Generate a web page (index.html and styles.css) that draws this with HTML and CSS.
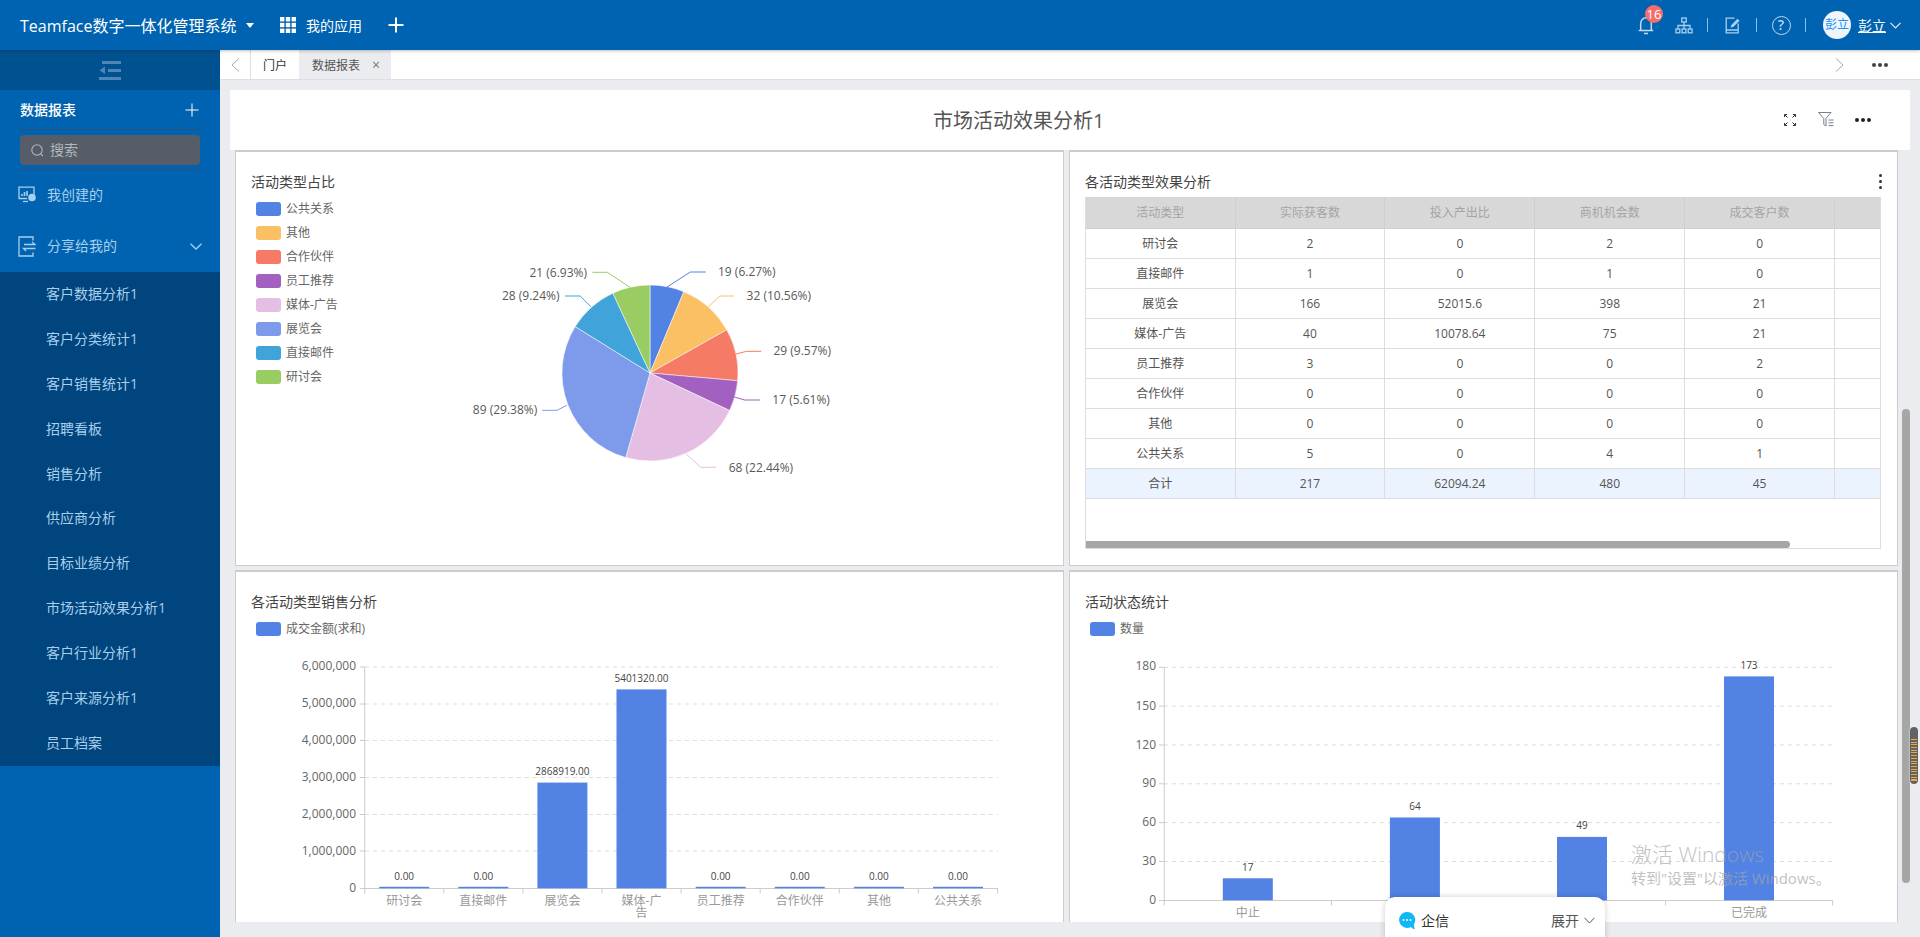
FILE: index.html
```html
<!DOCTYPE html>
<html lang="zh-CN">
<head>
    <meta charset="UTF-8">
    <title>市场活动效果分析1</title>
    <link rel="stylesheet" href="styles.css">
</head>
<body>
    <header class="topbar">
        <div class="brand">Teamface数字一体化管理系统</div>
        <span class="caret"></span>
        <svg class="apps-icon" width="16" height="16" viewBox="0 0 16 16" fill="#fff">
            <rect x="0" y="0" width="4.4" height="4.4"/><rect x="5.8" y="0" width="4.4" height="4.4"/><rect x="11.6" y="0" width="4.4" height="4.4"/>
            <rect x="0" y="5.8" width="4.4" height="4.4"/><rect x="5.8" y="5.8" width="4.4" height="4.4"/><rect x="11.6" y="5.8" width="4.4" height="4.4"/>
            <rect x="0" y="11.6" width="4.4" height="4.4"/><rect x="5.8" y="11.6" width="4.4" height="4.4"/><rect x="11.6" y="11.6" width="4.4" height="4.4"/>
        </svg>
        <div class="apps-label">我的应用</div>
        <svg class="add-icon" width="16" height="16" viewBox="0 0 16 16" stroke="#fff" stroke-width="2"><path d="M8 0.5V15.5M0.5 8H15.5"/></svg>

        <div class="topbar-right">
            <div class="bell">
                <svg width="16" height="19" viewBox="0 0 16 19" fill="none" stroke="#bfdcf2" stroke-width="1.5"><path d="M0.8 14.5h14.4M2.7 14.5V7.5C2.7 4.2 5 1.8 8 1.8s5.3 2.4 5.3 5.7v7M6 17.6h4"/></svg>
                <span class="badge">16</span>
            </div>
            <svg class="org-icon" width="18" height="17" viewBox="0 0 18 17" fill="none" stroke="#a9d0ee" stroke-width="1.3"><rect x="6.8" y="1" width="4.4" height="4"/><path d="M9 5V8.5M3 12V8.5H15V12M9 8.5V12"/><rect x="1" y="12" width="3.8" height="3.8"/><rect x="7.1" y="12" width="3.8" height="3.8"/><rect x="13.2" y="12" width="3.8" height="3.8"/></svg>
            <span class="sep sep-a"></span>
            <svg class="edit-icon" width="16" height="17" viewBox="0 0 16 17" fill="none" stroke="#a9d0ee" stroke-width="1.3"><path d="M9.5 1.2H1.2V15.8H13.2V6.5M1.2 13H13.2"/><path d="M5.5 10.5L6.3 8L12.5 1.8L14.6 3.8L8.3 9.9Z" fill="#a9d0ee" stroke="none"/></svg>
            <span class="sep sep-b"></span>
            <div class="help-icon">?</div>
            <span class="sep sep-c"></span>
            <div class="avatar">彭立</div>
            <div class="user-name">彭立</div>
            <svg class="user-caret" width="11" height="7" viewBox="0 0 11 7" fill="none" stroke="#dcebf7" stroke-width="1.2"><path d="M0.5 0.8L5.5 5.8L10.5 0.8"/></svg>
        </div>
    </header>

    <div class="layout">
        <aside class="sidebar">
            <div class="collapse">
                <svg width="22" height="19" viewBox="0 0 22 19" fill="#4d86b8"><rect x="3" y="0" width="19" height="3"/><rect x="9" y="8" width="13" height="3"/><rect x="0" y="16" width="22" height="3"/><path d="M6 5.5V13L0.5 9.3Z"/></svg>
            </div>
            <div class="side-title">
                <span>数据报表</span>
                <svg width="14" height="14" viewBox="0 0 14 14" stroke="#fff" stroke-width="1"><path d="M7 0.5V13.5M0.5 7H13.5"/></svg>
            </div>
            <div class="side-search">
                <div class="search-box">
                    <svg width="13" height="13" viewBox="0 0 13 13" fill="none" stroke="#b3b6bc" stroke-width="1.1"><circle cx="6" cy="6" r="5.2"/><path d="M9.8 9.8L12 12"/></svg>
                    <span>搜索</span>
                </div>
            </div>
            <div class="side-item">
                <svg width="18" height="18" viewBox="0 0 18 18" fill="none" stroke="#a8cfec" stroke-width="1.3"><path d="M16 9V1.2H1V12.5H9"/><path d="M5 15.5H10"/><path d="M4 10V8M6.5 10V6M9 10V5" stroke-width="1.6"/><circle cx="14" cy="11.5" r="3.8" fill="#a8cfec" stroke="none"/></svg>
                <span>我创建的</span>
            </div>
            <div class="side-item">
                <svg width="18" height="21" viewBox="0 0 18 21" fill="none" stroke="#a8cfec" stroke-width="1.3"><path d="M15 4.5V1H1V20H15V16.5"/><path d="M6 8.5H17L14 6M17.5 12.5H5.5L8 15"/></svg>
                <span>分享给我的</span>
                <svg class="side-caret" width="12" height="7" viewBox="0 0 12 7" fill="none" stroke="#a8cfec" stroke-width="1.3"><path d="M0.5 0.8L6 6L11.5 0.8"/></svg>
            </div>
            <ul class="side-list">
                <li>客户数据分析1</li>
                <li>客户分类统计1</li>
                <li>客户销售统计1</li>
                <li>招聘看板</li>
                <li>销售分析</li>
                <li>供应商分析</li>
                <li>目标业绩分析</li>
                <li>市场活动效果分析1</li>
                <li>客户行业分析1</li>
                <li>客户来源分析1</li>
                <li>员工档案</li>
            </ul>
        </aside>

        <main class="main">
            <div class="tabs">
                <div class="tab-arrow">
                    <svg width="9" height="14" viewBox="0 0 9 14" fill="none" stroke="#a8a8a8"><path d="M8 0.5L1 7L8 13.5"/></svg>
                </div>
                <div class="tab">门户</div>
                <div class="tab tab-active">数据报表<span class="tab-close">×</span></div>
                <div class="tabs-right">
                    <svg width="9" height="14" viewBox="0 0 9 14" fill="none" stroke="#a8a8a8"><path d="M1 0.5L8 7L1 13.5"/></svg>
                    <div class="dots"><i></i><i></i><i></i></div>
                </div>
            </div>

            <section class="report">
                <div class="report-head">
                    <h1>市场活动效果分析1</h1>
                    <div class="report-tools">
                        <svg width="12" height="12" viewBox="0 0 12 12" fill="none" stroke="#333" stroke-width="1"><path d="M0.5 3V0.5H3M9 0.5H11.5V3M11.5 9V11.5H9M3 11.5H0.5V9M1 1L3.5 3.5M11 1L8.5 3.5M11 11L8.5 8.5M1 11L3.5 8.5"/></svg>
                        <svg class="filter-icon" width="16" height="15" viewBox="0 0 16 15" fill="none" stroke="#77808c" stroke-width="1"><path d="M0.5 0.5H13L8 6.5V14L5.8 12.5V6.5Z"/><path d="M10.5 8H15.5M10.5 10.8H15.5M10.5 13.6H15.5"/></svg>
                        <div class="dots dots-dark"><i></i><i></i><i></i></div>
                    </div>
                </div>

                <div class="cards">
                    <article class="card">
                        <h2>活动类型占比</h2>
                        <div class="pie-body">
                            <ul class="legend">
                                <li><span class="swatch c1"></span>公共关系</li>
                                <li><span class="swatch c2"></span>其他</li>
                                <li><span class="swatch c3"></span>合作伙伴</li>
                                <li><span class="swatch c4"></span>员工推荐</li>
                                <li><span class="swatch c5"></span>媒体-广告</li>
                                <li><span class="swatch c6"></span>展览会</li>
                                <li><span class="swatch c7"></span>直接邮件</li>
                                <li><span class="swatch c8"></span>研讨会</li>
                            </ul>
                            <svg class="chart pie-chart" width="717" height="368" viewBox="345 197 717 368">
                                <g stroke="#fff" stroke-width="0.5">
                                    <path fill="#5182e4" d="M650 373L650 285A88 88 0 0 1 683.8 291.7Z"/>
                                    <path fill="#fcc064" d="M650 373L683.8 291.7A88 88 0 0 1 726.7 329.8Z"/>
                                    <path fill="#f57b66" d="M650 373L726.7 329.8A88 88 0 0 1 737.7 380.7Z"/>
                                    <path fill="#a260c0" d="M650 373L737.7 380.7A88 88 0 0 1 729.6 410.5Z"/>
                                    <path fill="#e4bfe3" d="M650 373L729.6 410.5A88 88 0 0 1 625.7 457.6Z"/>
                                    <path fill="#7d9aeb" d="M650 373L625.7 457.6A88 88 0 0 1 575.2 326.6Z"/>
                                    <path fill="#40a3d9" d="M650 373L575.2 326.6A88 88 0 0 1 612.9 293.2Z"/>
                                    <path fill="#9acc64" d="M650 373L612.9 293.2A88 88 0 0 1 650 285Z"/>
                                </g>
                                <g fill="none">
                                    <path stroke="#5182e4" d="M667 287L690.4 272H705.7"/>
                                    <path stroke="#fcc064" d="M708.4 306.7L719.9 296H734"/>
                                    <path stroke="#f57b66" d="M736 354L746.6 351.3H761.2"/>
                                    <path stroke="#a260c0" d="M734.4 397L744.7 400H760"/>
                                    <path stroke="#e4bfe3" d="M686.2 454L700.7 467.3H716"/>
                                    <path stroke="#7d9aeb" d="M566.8 405.3L557.2 410.3H542.3"/>
                                    <path stroke="#40a3d9" d="M590.9 306.7L580.2 296H564.9"/>
                                    <path stroke="#9acc64" d="M630 287.3L607.3 272.3H592.4"/>
                                </g>
                                <g class="pie-label">
                                    <text x="718" y="271">19 (6.27%)</text>
                                    <text x="746.6" y="295">32 (10.56%)</text>
                                    <text x="773.4" y="350">29 (9.57%)</text>
                                    <text x="772.3" y="399.5">17 (5.61%)</text>
                                    <text x="728.7" y="467">68 (22.44%)</text>
                                    <text class="end" x="537.3" y="409.5">89 (29.38%)</text>
                                    <text class="end" x="559.5" y="295">28 (9.24%)</text>
                                    <text class="end" x="587" y="272">21 (6.93%)</text>
                                </g>
                            </svg>
                        </div>
                    </article>

                    <article class="card">
                        <h2>各活动类型效果分析</h2>
                        <div class="vdots"><i></i><i></i><i></i></div>
                        <div class="table-box">
                            <div class="table-scroll">
                                <table class="data-table">
                                    <thead>
                                        <tr><th>活动类型</th><th>实际获客数</th><th>投入产出比</th><th>商机机会数</th><th>成交客户数</th><th></th></tr>
                                    </thead>
                                    <tbody>
                                        <tr><td>研讨会</td><td>2</td><td>0</td><td>2</td><td>0</td><td></td></tr>
                                        <tr><td>直接邮件</td><td>1</td><td>0</td><td>1</td><td>0</td><td></td></tr>
                                        <tr><td>展览会</td><td>166</td><td>52015.6</td><td>398</td><td>21</td><td></td></tr>
                                        <tr><td>媒体-广告</td><td>40</td><td>10078.64</td><td>75</td><td>21</td><td></td></tr>
                                        <tr><td>员工推荐</td><td>3</td><td>0</td><td>0</td><td>2</td><td></td></tr>
                                        <tr><td>合作伙伴</td><td>0</td><td>0</td><td>0</td><td>0</td><td></td></tr>
                                        <tr><td>其他</td><td>0</td><td>0</td><td>0</td><td>0</td><td></td></tr>
                                        <tr><td>公共关系</td><td>5</td><td>0</td><td>4</td><td>1</td><td></td></tr>
                                        <tr class="total"><td>合计</td><td>217</td><td>62094.24</td><td>480</td><td>45</td><td></td></tr>
                                    </tbody>
                                </table>
                            </div>
                            <div class="table-thumb"></div>
                        </div>
                    </article>

                    <article class="card">
                        <h2>各活动类型销售分析</h2>
                        <div class="legend-row"><span class="swatch c1"></span>成交金额(求和)</div>
                        <svg class="chart" width="826" height="281" viewBox="236 641 826 281">
                            <g class="grid">
                                <path d="M365 667H998M365 704H998M365 740.5H998M365 777.5H998M365 814.5H998M365 851H998"/>
                            </g>
                            <g class="axis">
                                <path d="M364.7 667V888.5M360 667H365M360 704H365M360 740.5H365M360 777.5H365M360 814.5H365M360 851H365M360 888.5H998"/>
                                <path d="M364.7 888.5V893.5M443.8 888.5V893.5M522.9 888.5V893.5M602 888.5V893.5M681.1 888.5V893.5M760.2 888.5V893.5M839.3 888.5V893.5M918.4 888.5V893.5M997.5 888.5V893.5"/>
                            </g>
                            <g class="y-label">
                                <text x="356" y="665.7">6,000,000</text>
                                <text x="356" y="702.7">5,000,000</text>
                                <text x="356" y="739.7">4,000,000</text>
                                <text x="356" y="776.7">3,000,000</text>
                                <text x="356" y="813">2,000,000</text>
                                <text x="356" y="850">1,000,000</text>
                                <text x="356" y="887">0</text>
                            </g>
                            <g fill="#5182e4">
                                <rect x="379.2" y="886.8" width="50" height="1.5"/>
                                <rect x="458.3" y="886.8" width="50" height="1.5"/>
                                <rect x="537.4" y="782.6" width="50" height="105.7"/>
                                <rect x="616.5" y="689.4" width="50" height="198.9"/>
                                <rect x="695.7" y="886.8" width="50" height="1.5"/>
                                <rect x="774.8" y="886.8" width="50" height="1.5"/>
                                <rect x="853.9" y="886.8" width="50" height="1.5"/>
                                <rect x="933" y="886.8" width="50" height="1.5"/>
                            </g>
                            <g class="bar-value">
                                <text x="404.2" y="876">0.00</text>
                                <text x="483.3" y="876">0.00</text>
                                <text x="562.4" y="771">2868919.00</text>
                                <text x="641.5" y="678">5401320.00</text>
                                <text x="720.7" y="876">0.00</text>
                                <text x="799.8" y="876">0.00</text>
                                <text x="878.9" y="876">0.00</text>
                                <text x="958" y="876">0.00</text>
                            </g>
                            <g class="x-label">
                                <text x="404.2" y="900">研讨会</text>
                                <text x="483.3" y="900">直接邮件</text>
                                <text x="562.4" y="900">展览会</text>
                                <text x="641.5" y="900">媒体-广<tspan x="641.5" dy="12">告</tspan></text>
                                <text x="720.7" y="900">员工推荐</text>
                                <text x="799.8" y="900">合作伙伴</text>
                                <text x="878.9" y="900">其他</text>
                                <text x="958" y="900">公共关系</text>
                            </g>
                        </svg>
                    </article>

                    <article class="card">
                        <h2>活动状态统计</h2>
                        <div class="legend-row"><span class="swatch c1"></span>数量</div>
                        <svg class="chart" width="826" height="281" viewBox="1070 641 826 281">
                            <g class="grid">
                                <path d="M1164 667.3H1832.6M1164 706.1H1832.6M1164 745H1832.6M1164 783.8H1832.6M1164 822.6H1832.6M1164 861.5H1832.6"/>
                            </g>
                            <g class="axis">
                                <path d="M1164.3 667.3V900.5M1159 667.3H1164M1159 706.1H1164M1159 745H1164M1159 783.8H1164M1159 822.6H1164M1159 861.5H1164M1159 900.5H1832.6"/>
                                <path d="M1164.3 900.5V905.5M1331.4 900.5V905.5M1498.5 900.5V905.5M1665.6 900.5V905.5M1832.6 900.5V905.5"/>
                            </g>
                            <g class="y-label">
                                <text x="1156" y="665.7">180</text>
                                <text x="1156" y="705">150</text>
                                <text x="1156" y="744">120</text>
                                <text x="1156" y="782.7">90</text>
                                <text x="1156" y="821">60</text>
                                <text x="1156" y="860">30</text>
                                <text x="1156" y="899">0</text>
                            </g>
                            <g fill="#5182e4">
                                <rect x="1222.8" y="878.3" width="50" height="22"/>
                                <rect x="1389.9" y="817.5" width="50" height="82.8"/>
                                <rect x="1557" y="836.9" width="50" height="63.4"/>
                                <rect x="1724" y="676.4" width="50" height="223.9"/>
                            </g>
                            <g class="bar-value">
                                <text x="1247.8" y="867">17</text>
                                <text x="1414.9" y="806">64</text>
                                <text x="1582" y="825">49</text>
                                <text x="1749" y="665">173</text>
                            </g>
                            <g class="x-label">
                                <text x="1247.8" y="912">中止</text>
                                <text x="1749" y="912">已完成</text>
                            </g>
                        </svg>
                    </article>
                </div>
                <div class="page-thumb"></div>
            </section>
        </main>
    </div>

    <div class="side-scroller"><div class="stripes"></div></div>

    <div class="watermark">
        <div class="wm-big">激活 Windows</div>
        <div class="wm-small">转到"设置"以激活 Windows。</div>
    </div>

    <div class="chat-widget">
        <svg width="18" height="19" viewBox="0 0 18 19"><path fill="#12b7f5" d="M9 1A8 8 0 1 0 13 16C14 17.5 15.5 18 17 18C16 16.5 16 15 16 13.2A8 8 0 0 0 9 1Z"/><g fill="#fff"><circle cx="5.5" cy="9" r="1"/><circle cx="9" cy="9" r="1"/><circle cx="12.5" cy="9" r="1"/></g></svg>
        <span class="chat-name">企信</span>
        <span class="chat-open">展开</span>
        <svg width="11" height="7" viewBox="0 0 11 7" fill="none" stroke="#555"><path d="M0.5 0.8L5.5 6L10.5 0.8"/></svg>
    </div>
</body>
</html>
```

FILE: styles.css
```css
* {
    box-sizing: border-box;
}
html, body {
    margin: 0;
    padding: 0;
    height: 937px;
    overflow: hidden;
}
body {
    position: relative;
    font-family: "Open Sans", "Noto Sans CJK SC", sans-serif;
    font-size: 12px;
    color: #333;
    background-color: #ebecf0;
}
ul {
    margin: 0;
    padding: 0;
    list-style: none;
}

/* top bar */
.topbar {
    display: flex;
    align-items: center;
    height: 50px;
    padding-left: 20px;
    background: #0063b1;
    color: #fff;
    box-shadow: 0 1px 3px rgba(0,0,0,0.25);
    position: relative;
    z-index: 2;
}
.brand {
    width: 226px;
    font-size: 16px;
    white-space: nowrap;
}
.caret {
    width: 0;
    height: 0;
    border-left: 4.5px solid transparent;
    border-right: 4.5px solid transparent;
    border-top: 5px solid #fff;
}
.apps-icon {
    margin-left: 26px;
}
.apps-label {
    margin-left: 10px;
    font-size: 14px;
}
.add-icon {
    margin-left: 26px;
}
.topbar-right {
    display: flex;
    align-items: center;
    margin-left: auto;
    padding-right: 19px;
}
.bell {
    position: relative;
    display: flex;
    height: 19px;
}
.badge {
    position: absolute;
    left: 7px;
    top: -11px;
    width: 18px;
    height: 18px;
    border-radius: 50%;
    background: #f56c6c;
    color: #fff;
    text-align: center;
    line-height: 18px;
    font-size: 13px;
}
.org-icon {
    margin-left: 21px;
}
.sep {
    width: 1px;
    height: 14px;
    background: #8fbde2;
}
.sep-a {
    margin: 0 17px 0 14px;
}
.sep-b {
    margin: 0 14.5px 0 15px;
}
.sep-c {
    margin: 0 17px 0 14.5px;
}
.help-icon {
    width: 19px;
    height: 19px;
    border: 1.5px solid #b9d9f2;
    border-radius: 50%;
    color: #b9d9f2;
    text-align: center;
    line-height: 16px;
    font-size: 14px;
    font-weight: 600;
}
.avatar {
    width: 28px;
    height: 28px;
    border-radius: 50%;
    background: #f0f5fb;
    color: #1890ff;
    text-align: center;
    line-height: 28px;
    font-size: 12px;
}
.user-name {
    margin-left: 7px;
    font-size: 14px;
    text-decoration: underline;
}
.user-caret {
    margin-left: 4px;
}

/* page columns */
.layout {
    display: flex;
    height: 887px;
}
.sidebar {
    width: 220px;
    flex-shrink: 0;
    background: #0063b1;
}
.collapse {
    display: flex;
    justify-content: center;
    align-items: center;
    height: 40px;
    background: #00518f;
}
.side-title {
    display: flex;
    justify-content: space-between;
    align-items: center;
    height: 40px;
    margin: 0 20px;
    padding-right: 1px;
    border-bottom: 1px solid #2f4f75;
    color: #fff;
    font-size: 14px;
    font-weight: 500;
}
.side-title span {
    padding-bottom: 2px;
}
.side-search {
    margin: 0 20px;
    padding: 5px 0 4px;
    border-bottom: 1px solid #2f4f75;
}
.search-box {
    display: flex;
    align-items: center;
    gap: 6px;
    height: 30px;
    padding-left: 11px;
    border-radius: 4px;
    background: #565c68;
    color: #b3b6bc;
    font-size: 14px;
}
.search-box span {
    padding-bottom: 2px;
}
.side-item {
    display: flex;
    align-items: center;
    height: 51px;
    padding-left: 18px;
    padding-bottom: 1px;
    color: #a8cfec;
    font-size: 14px;
}
.side-item span {
    margin-left: 11px;
    padding-bottom: 3px;
}
.side-caret {
    margin-left: auto;
    margin-right: 18px;
}
.side-list {
    background: #00457d;
}
.side-list li {
    height: 44.9px;
    line-height: 44.9px;
    padding-left: 46px;
    color: #a8cfec;
    font-size: 14px;
}

/* tabs */
.main {
    flex: 1;
    min-width: 0;
    display: flex;
    flex-direction: column;
}
.tabs {
    display: flex;
    height: 30px;
    flex-shrink: 0;
    background: #fff;
    border-bottom: 1px solid #dcdfe4;
}
.tab-arrow {
    display: flex;
    align-items: center;
    justify-content: center;
    width: 31px;
    border-right: 1px solid #dcdfe4;
}
.tab {
    display: flex;
    align-items: center;
    justify-content: center;
    width: 48px;
    color: #333;
}
.tab-active {
    width: 92px;
    justify-content: flex-start;
    padding-left: 13px;
    background: #ebecf0;
    color: #555;
}
.tab-close {
    margin-left: 12px;
    color: #777;
    font-size: 14px;
}
.tabs-right {
    display: flex;
    align-items: center;
    gap: 28px;
    margin-left: auto;
    padding-right: 32px;
}
.dots {
    display: flex;
    gap: 2px;
}
.dots i {
    width: 4px;
    height: 4px;
    border-radius: 50%;
    background: #444;
}
.dots-dark i {
    background: #222;
}

/* report */
.report {
    position: relative;
    flex: 1;
    min-height: 0;
    display: flex;
    flex-direction: column;
    margin: 10px 10px 15px;
}
.report-head {
    display: flex;
    align-items: center;
    height: 60px;
    flex-shrink: 0;
    padding-left: 703px;
    padding-right: 39px;
    background: #fff;
}
.report-head h1 {
    margin: 0;
    padding-bottom: 2px;
    font-size: 20px;
    font-weight: 400;
    color: #555;
}
.report-tools {
    display: flex;
    align-items: center;
    margin-left: auto;
}
.filter-icon {
    margin: -2px 21px 0 22px;
}
.cards {
    flex: 1;
    min-height: 0;
    overflow: hidden;
    display: grid;
    grid-template-columns: 829px 829px;
    grid-template-rows: 416px 416px;
    gap: 4px 5px;
    padding-left: 5px;
}
.card {
    position: relative;
    padding: 20px 15px 0;
    background: #fff;
    border: 1px solid #ccc;
    border-top-width: 2px;
}
.card h2 {
    margin: 0;
    height: 20px;
    line-height: 20px;
    font-size: 14px;
    font-weight: 400;
    color: #444;
}
.chart {
    display: block;
    margin-left: -15px;
}
.pie-chart {
    flex-shrink: 0;
    margin-left: 0;
}
.pie-body {
    display: flex;
    margin-top: 5px;
}
.legend {
    width: 94px;
    flex-shrink: 0;
    padding-left: 5px;
}
.legend li, .legend-row {
    display: flex;
    align-items: center;
    height: 24px;
    padding-bottom: 2px;
    color: #666;
}
.legend-row {
    margin-top: 5px;
    padding-left: 5px;
}
.swatch {
    width: 25px;
    height: 14px;
    margin-top: 2px;
    margin-right: 5px;
    border-radius: 3px;
}
.c1 { background: #5182e4; }
.c2 { background: #fcc064; }
.c3 { background: #f57b66; }
.c4 { background: #a260c0; }
.c5 { background: #e4bfe3; }
.c6 { background: #7d9aeb; }
.c7 { background: #40a3d9; }
.c8 { background: #9acc64; }

/* chart text */
svg text {
    font-family: "Open Sans", "Noto Sans CJK SC", sans-serif;
    dominant-baseline: central;
}
.pie-label text {
    font-size: 12px;
    fill: #595959;
}
.pie-label .end {
    text-anchor: end;
}
.grid path {
    fill: none;
    stroke: #ddd;
    stroke-dasharray: 4 4;
}
.axis path {
    fill: none;
    stroke: #ccc;
}
.y-label text {
    font-size: 12px;
    fill: #666;
    text-anchor: end;
}
.x-label text {
    font-size: 12px;
    fill: #999;
    text-anchor: middle;
}
.bar-value text {
    font-size: 10px;
    fill: #444;
    text-anchor: middle;
}

/* table */
.vdots {
    position: absolute;
    right: 15px;
    top: 22px;
    display: flex;
    flex-direction: column;
    gap: 3px;
}
.vdots i {
    width: 3px;
    height: 3px;
    border-radius: 50%;
    background: #333;
}
.table-box {
    display: flex;
    flex-direction: column;
    height: 352px;
    margin-top: 5px;
    margin-right: 1px;
    border: 1px solid #ddd;
    border-top: 0;
}
.table-scroll {
    flex: 1;
    min-height: 0;
    overflow: hidden;
}
.data-table {
    width: 899px;
    table-layout: fixed;
    border-collapse: collapse;
}
.data-table th, .data-table td {
    height: 30px;
    padding: 0;
    border: 1px solid #ddd;
    border-left: 0;
    text-align: center;
    font-weight: 400;
}
.data-table th {
    height: 31px;
    background: #d8d8d8;
    color: #a5a5a5;
    border-top: 0;
    border-color: #cfcfcf;
}
.data-table td {
    color: #555;
}
.data-table th:first-child, .data-table td:first-child {
    width: 149px;
}
.total td {
    background: #eaf3fe;
}
.table-thumb {
    width: 704px;
    height: 7px;
    flex-shrink: 0;
    background: #a6a6a6;
    border-radius: 0 4px 4px 0;
}

/* things lying over the page */
.page-thumb {
    position: absolute;
    right: 0;
    top: 319px;
    width: 8px;
    height: 474px;
    border-radius: 4px;
    background: #a6a6a6;
}
.side-scroller {
    position: absolute;
    left: 1910px;
    top: 727px;
    width: 8px;
    height: 57px;
    padding-top: 12px;
    border-radius: 4px;
    background: #5f6368;
    box-shadow: 0 0 2px #fff;
}
.stripes {
    height: 43px;
    margin: 0 1px;
    background: repeating-linear-gradient(#f0a63c 0 1px, #5f6368 1px 2.7px);
}
.watermark {
    position: absolute;
    left: 1631px;
    top: 840px;
    color: rgba(165,165,165,0.7);
    pointer-events: none;
}
.wm-big {
    font-size: 21px;
    font-weight: 300;
    line-height: 28px;
}
.wm-small {
    font-size: 15px;
    line-height: 20px;
}
.chat-widget {
    position: absolute;
    left: 1385px;
    top: 897px;
    display: flex;
    align-items: center;
    width: 220px;
    height: 50px;
    padding: 0 10px 4px 13px;
    background: #fff;
    border-radius: 10px;
    box-shadow: 0 0 6px rgba(0,0,0,0.2);
    font-size: 14px;
}
.chat-name {
    margin-left: 5px;
    color: #333;
}
.chat-open {
    margin-left: auto;
    margin-right: 5px;
    color: #555;
}
```
